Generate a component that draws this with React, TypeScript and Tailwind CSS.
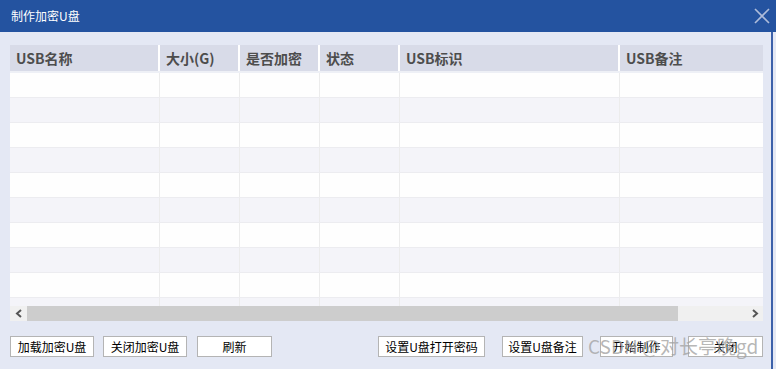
import React from 'react';

const cols = [
  { label: 'USB名称', w: 'w-[150px]' },
  { label: '大小(G)', w: 'w-[80px]' },
  { label: '是否加密', w: 'w-[80px]' },
  { label: '状态', w: 'w-[80px]' },
  { label: 'USB标识', w: 'w-[220px]' },
  { label: 'USB备注', w: 'flex-1' },
];

const rows = Array.from({ length: 10 }, (_, i) => i);

const Btn = ({ label, w }: { label: string; w: string }) => (
  <button
    className={`${w} h-[21px] bg-white border border-[#b4b4b4] text-[12px] text-black leading-none flex items-center justify-center`}
  >
    {label}
  </button>
);

export default function App() {
  return (
    <div
      className="w-[776px] h-[369px] bg-[#e4e8f4] relative overflow-hidden flex flex-col"
      style={{ fontFamily: '"Noto Sans CJK SC", "Noto Sans", sans-serif' }}
    >
      {/* Title bar */}
      <div className="h-[32px] bg-[#2453a0] flex items-center justify-between pl-[11px] pr-[6px] shrink-0">
        <span className="text-white text-[12px]">制作加密U盘</span>
        <svg width="16" height="16" viewBox="0 0 16 16" className="mb-[1px]">
          <path d="M1 1 L15 15 M15 1 L1 15" stroke="#aebcda" strokeWidth="1.6" fill="none" />
        </svg>
      </div>

      <div className="flex-1 w-[773px] border-r-2 border-[#3c61aa] pl-[10px] pt-[13px] flex flex-col">
        {/* Table */}
        <div className="w-[753px] flex flex-col">
          <div className="flex h-[28px] bg-[#d8dbe8] border-b-2 border-[#eef0f6]">
            {cols.map((c, i) => (
              <div
                key={c.label}
                className={`${c.w} flex items-center pl-[6px] text-[14px] font-bold text-[#4d4d4d] ${i < cols.length - 1 ? 'border-r-2 border-white' : ''}`}
              >
                {c.label}
              </div>
            ))}
          </div>
          <div className="h-[233px] overflow-hidden">
            {rows.map((r) => (
              <div
                key={r}
                className={`flex h-[25px] border-b border-[#ececf0] ${r % 2 === 0 ? 'bg-[#fefefe]' : 'bg-[#f4f4f9]'}`}
              >
                {cols.map((c, i) => (
                  <div
                    key={c.label}
                    className={`${c.w} ${i < cols.length - 1 ? 'border-r border-[#ececec]' : ''}`}
                  />
                ))}
              </div>
            ))}
          </div>
          {/* Horizontal scrollbar */}
          <div className="flex h-[15px] bg-[#f0f0f0]">
            <div className="w-[17px] flex items-center justify-center">
              <svg width="8" height="9" viewBox="0 0 8 9">
                <path d="M6 1 L2 4.5 L6 8" stroke="#555" strokeWidth="2" fill="none" />
              </svg>
            </div>
            <div className="w-[651px] bg-[#cdcdcd]" />
            <div className="flex-1 flex items-center justify-end pr-[4px]">
              <svg width="8" height="9" viewBox="0 0 8 9">
                <path d="M2 1 L6 4.5 L2 8" stroke="#555" strokeWidth="2" fill="none" />
              </svg>
            </div>
          </div>
        </div>

        {/* Buttons */}
        <div className="w-[753px] flex items-center mt-[15px]">
          <Btn label="加载加密U盘" w="w-[84px]" />
          <div className="w-[9px]" />
          <Btn label="关闭加密U盘" w="w-[84px]" />
          <div className="w-[10px]" />
          <Btn label="刷新" w="w-[75px]" />
          <div className="w-[106px]" />
          <Btn label="设置U盘打开密码" w="w-[107px]" />
          <div className="w-[17px]" />
          <Btn label="设置U盘备注" w="w-[81px]" />
          <div className="w-[17px]" />
          <Btn label="开始制作" w="w-[73px]" />
          <div className="w-[15px]" />
          <Btn label="关闭" w="w-[75px]" />
        </div>
      </div>

      {/* Watermark */}
      <div className="absolute left-[588px] top-[336px] text-[19px] leading-none text-[#a0a0a0]/75 whitespace-nowrap pointer-events-none">
        CSDN @对长亭晚gd
      </div>
    </div>
  );
}
